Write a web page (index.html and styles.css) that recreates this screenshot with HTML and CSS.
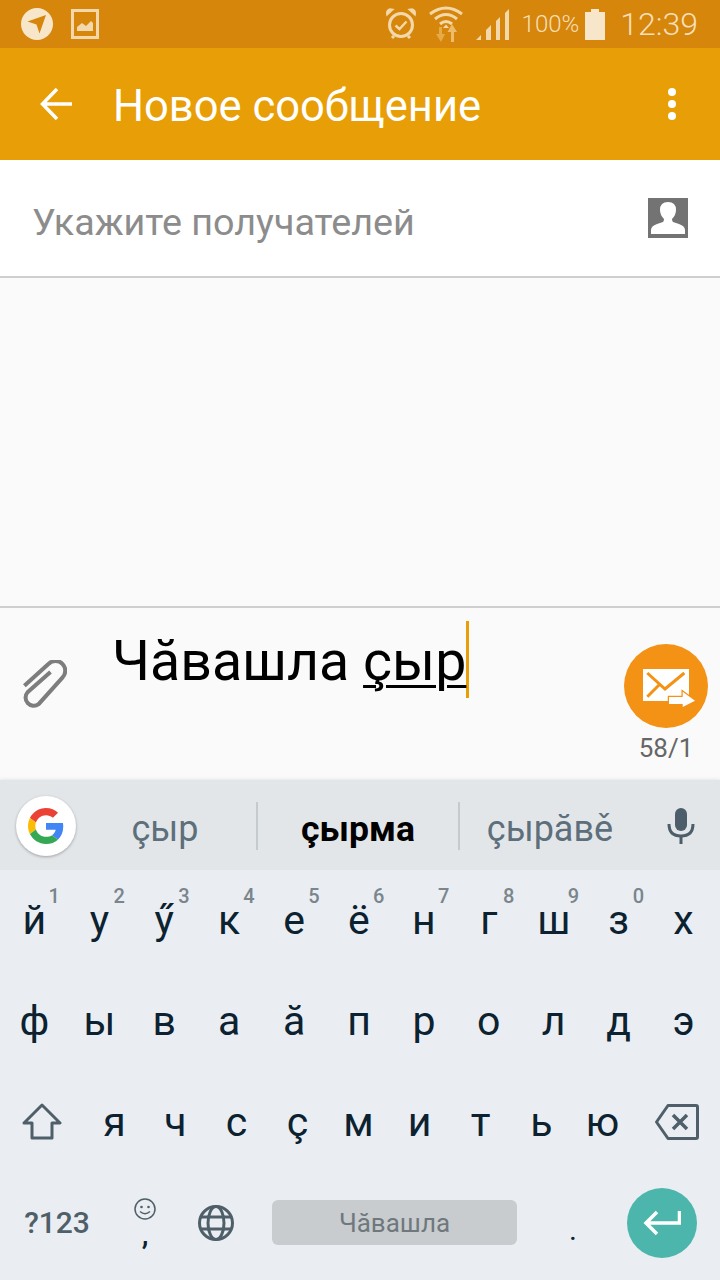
FILE: index.html
```html
<!DOCTYPE html>
<html lang="cv">

<head>
  <meta charset="UTF-8">
  <meta name="viewport" content="width=device-width, initial-scale=1.0">
  <title>Новое сообщение</title>
  <link rel="stylesheet" href="styles.css">
</head>

<body>
  <div class="screen">
    <header class="status_bar">
      <div class="status_left">
        <svg width="32" height="32" viewBox="0 0 32 32"><circle cx="16" cy="16" r="16" fill="#f8e6cb"/><path d="M6.500 13.500 L25 7 L18.500 25.500 L15.500 16.500 Z" fill="#d5860b"/></svg>
        <svg width="28" height="30" viewBox="0 0 28 30"><rect x="1.500" y="1.500" width="25" height="27" fill="none" stroke="#f3d8ab" stroke-width="3"/><path d="M6 22 V18 L11 14 L15 17 L20 12 L22 14 V22 Z" fill="#f3d8ab"/></svg>
      </div>
      <div class="status_right">
        <svg class="ic_alarm" width="30" height="32" viewBox="0 0 30 32"><circle cx="15" cy="17" r="11.500" fill="none" stroke="#f3d8ab" stroke-width="3"/><path d="M9.500 17.500 L13.500 21 L20.500 13.500" fill="none" stroke="#f3d8ab" stroke-width="2.500"/><path d="M1 7 L7 1.500 L4 1 Q0 2 1 7 Z M29 7 L23 1.500 L26 1 Q30 2 29 7 Z" fill="#f3d8ab" stroke="#f3d8ab" stroke-width="1.500"/><path d="M6 30 L8 28 M24 30 L22 28" stroke="#f3d8ab" stroke-width="3"/></svg>
        <svg class="ic_wifi" width="34" height="36" viewBox="0 0 34 36"><g fill="none" stroke="#f3d8ab" stroke-width="3"><path d="M1 8 Q17 -4 33 8"/><path d="M6 13 Q17 4 28 13"/><path d="M11 18 Q17 13 23 18"/></g><path d="M14 22 L17 18.500 L20 22 Z" fill="#f3d8ab"/><path d="M10 21 V28 H7 L12 36 L16 28 H13 V21 Z" fill="#e7aa48"/><path d="M22 36 V26 H18.500 L23 18 L28 26 H25 V36 Z" fill="#eebb6c"/></svg>
        <svg class="ic_signal" width="33" height="33" viewBox="0 0 33 33"><path d="M0 32 L5 27 V32 Z M10 32 V22 L15 17 V32 Z M20 32 V13 L24 9 V32 Z M29 32 V5 L33 1 V32 Z" fill="#f3d8ab"/></svg>
        <span class="battery_text">100%</span>
        <svg class="ic_battery" width="20" height="31" viewBox="0 0 20 31"><path d="M0 3 H6 V0 H14 V3 H20 V31 H0 Z" fill="#f8e6cb"/></svg>
        <time class="clock">12:39</time>
      </div>
    </header>

    <div class="toolbar">
      <svg class="ic_back" width="34" height="34" viewBox="0 0 34 34"><path d="M33 17 H4 M18 2 L3.500 17 L18 32" fill="none" stroke="#fff" stroke-width="3.500"/></svg>
      <h1 class="toolbar_title">Новое сообщение</h1>
      <div class="more_dots"><i></i><i></i><i></i></div>
    </div>

    <div class="recipient">
      <span class="recipient_hint">Укажите получателей</span>
      <svg width="40" height="40" viewBox="0 0 40 40"><rect width="40" height="40" fill="#737373"/><path d="M3 36 V32 Q3 28 9 26 L15 24 Q16 23 16 21 Q12 17 12 12 Q12 4 20 4 Q28 4 28 12 Q28 17 24 21 Q24 23 25 24 L31 26 Q37 28 37 32 V36 Z" fill="#fff"/></svg>
    </div>

    <main class="thread"></main>

    <section class="compose">
      <svg class="ic_clip" width="44" height="48" viewBox="0 0 48 52"><path d="M1.500 28 L28 4 A10.600 10.600 0 0 1 43 19 L17 48 A8.900 8.900 0 0 1 5 35 L30 13" fill="none" stroke="#7d7d7d" stroke-width="4.400"/></svg>
      <p class="message"><span>Чăвашла </span><span class="message_current">çыр</span></p>
      <div class="send">
        <div class="send_btn">
          <svg width="56" height="46" viewBox="0 0 56 46"><rect x="1" y="4" width="46" height="32" fill="#fff"/><path d="M5.300 8 L23 24 L42.300 8 M5.300 31.700 L18 19" fill="none" stroke="#f39214" stroke-width="3"/><path d="M27 32 H40.700 V26.700 L53 35.700 L40.700 42 V39 H27 Z" fill="#fff" stroke="#f39214" stroke-width="2.500" paint-order="stroke"/></svg>
        </div>
        <span class="send_count">58/1</span>
      </div>
    </section>

    <div class="suggestions">
      <div class="g_btn">
        <svg width="36" height="36" viewBox="0 0 48 48"><path fill="#EA4335" d="M24 9.500c3.540 0 6.710 1.220 9.210 3.600l6.850-6.850C35.900 2.380 30.470 0 24 0 14.620 0 6.510 5.380 2.560 13.220l7.980 6.190C12.430 13.720 17.740 9.500 24 9.500z"/><path fill="#4285F4" d="M46.980 24.550c0-1.570-.15-3.090-.38-4.550H24v9.020h12.940c-.58 2.960-2.260 5.480-4.780 7.180l7.730 6c4.510-4.180 7.090-10.360 7.090-17.650z"/><path fill="#FBBC05" d="M10.530 28.590c-.48-1.450-.76-2.990-.76-4.590s.27-3.140.76-4.590l-7.980-6.190C.92 16.460 0 20.120 0 24c0 3.880.92 7.540 2.560 10.780l7.970-6.190z"/><path fill="#34A853" d="M24 48c6.480 0 11.930-2.130 15.890-5.810l-7.730-6c-2.150 1.450-4.920 2.300-8.160 2.300-6.260 0-11.570-4.220-13.470-9.910l-7.980 6.190C6.510 42.620 14.620 48 24 48z"/></svg>
      </div>
      <span class="suggest suggest_first">çыр</span>
      <span class="suggest suggest_main">çырма</span>
      <span class="suggest">çырăвě</span>
      <svg class="ic_mic" width="28" height="36" viewBox="0 0 28 36"><rect x="8" y="0" width="12" height="23" rx="6" fill="#4c5e69"/><path d="M2 16 Q2 28 14 28 Q26 28 26 16" fill="none" stroke="#4c5e69" stroke-width="3"/><rect x="12.500" y="28" width="3" height="8" fill="#4c5e69"/></svg>
    </div>

    <div class="keyboard">
      <div class="key_row row_full">
        <div class="key">й<sup>1</sup></div>
        <div class="key">у<sup>2</sup></div>
        <div class="key">ӳ<sup>3</sup></div>
        <div class="key">к<sup>4</sup></div>
        <div class="key">е<sup>5</sup></div>
        <div class="key">ё<sup>6</sup></div>
        <div class="key">н<sup>7</sup></div>
        <div class="key">г<sup>8</sup></div>
        <div class="key">ш<sup>9</sup></div>
        <div class="key">з<sup>0</sup></div>
        <div class="key">х</div>
      </div>
      <div class="key_row row_full">
        <div class="key">ф</div>
        <div class="key">ы</div>
        <div class="key">в</div>
        <div class="key">а</div>
        <div class="key">ă</div>
        <div class="key">п</div>
        <div class="key">р</div>
        <div class="key">о</div>
        <div class="key">л</div>
        <div class="key">д</div>
        <div class="key">э</div>
      </div>
      <div class="key_row row_shift">
        <div class="key">
          <svg width="40" height="38" viewBox="0 0 40 38"><path d="M20 2 L38 20 H30 V35 H10 V20 H2 Z" fill="none" stroke="#4f5f69" stroke-width="3" stroke-linejoin="round"/></svg>
        </div>
        <div class="key">я</div>
        <div class="key">ч</div>
        <div class="key">с</div>
        <div class="key">ç</div>
        <div class="key">м</div>
        <div class="key">и</div>
        <div class="key">т</div>
        <div class="key">ь</div>
        <div class="key">ю</div>
        <div class="key">
          <svg width="44" height="36" viewBox="0 0 44 36"><path d="M1.500 18 L13 1.500 H41 Q42.500 1.500 42.500 3 V33 Q42.500 34.500 41 34.500 H13 Z" fill="none" stroke="#4f5f69" stroke-width="3" stroke-linejoin="round"/><path d="M18 11 L32 25 M32 11 L18 25" stroke="#4f5f69" stroke-width="3.500"/></svg>
        </div>
      </div>
      <div class="key_row row_bottom">
        <div class="key key_sym">?123</div>
        <div class="key key_emoji">
          <svg width="22" height="22" viewBox="0 0 22 22"><circle cx="11" cy="11" r="10" fill="none" stroke="#4f5f69" stroke-width="1.500"/><circle cx="7.500" cy="9" r="1.300" fill="#4f5f69"/><circle cx="14.500" cy="9" r="1.300" fill="#4f5f69"/><path d="M6 13.500 Q11 18 16 13.500" fill="none" stroke="#4f5f69" stroke-width="1.500"/></svg>
          <span>,</span>
        </div>
        <div class="key">
          <svg width="38" height="38" viewBox="0 0 38 38"><g fill="none" stroke="#4f5f69" stroke-width="3"><circle cx="19" cy="19" r="16.500"/><ellipse cx="19" cy="19" rx="8" ry="16.500"/><path d="M4 13 H34 M4 25 H34"/></g></svg>
        </div>
        <div class="key"><div class="space_bar">Чăвашла</div></div>
        <div class="key key_dot">.</div>
        <div class="key">
          <div class="enter_btn">
            <svg width="38" height="26" viewBox="0 0 38 26"><path d="M36.500 1 V13 H4 M14 2 L3 13 L14 24" fill="none" stroke="#fff" stroke-width="3.500"/></svg>
          </div>
        </div>
      </div>
    </div>
  </div>
</body>

</html>
```

FILE: styles.css
```css
* {
  box-sizing: border-box;
  margin: 0;
}

body {
  margin: 0;
  font-family: Roboto, "Noto Sans", sans-serif;
}

.screen {
  display: flex;
  flex-direction: column;
  width: 720px;
  height: 1280px;
  overflow: hidden;
  background: #fafafa;
}

/* status bar */
.status_bar {
  display: flex;
  justify-content: space-between;
  align-items: center;
  height: 48px;
  padding: 0 22px 0 21px;
  background: #d5860b;
  color: #f6dfb9;
}

.status_left,
.status_right {
  display: flex;
  align-items: center;
}

.status_left {
  gap: 18px;
}

.status_left svg,
.status_right svg {
  display: block;
}

.ic_alarm {
  margin-right: 13px;
}

.ic_wifi {
  margin-right: 13px;
}

.ic_signal {
  margin-right: 13px;
}

.battery_text {
  font-size: 24px;
  font-weight: 300;
  margin-right: 6px;
}

.ic_battery {
  margin-right: 15px;
}

.clock {
  font-size: 32px;
  font-weight: 300;
}

/* toolbar */
.toolbar {
  display: flex;
  align-items: center;
  height: 112px;
  padding: 0 44px 0 39px;
  background: #e89e06;
  color: #fff;
}

.ic_back {
  margin-right: 40px;
}

.toolbar_title {
  flex: 1;
  padding-top: 5px;
  font-size: 43.5px;
  font-weight: 400;
}

.more_dots {
  display: flex;
  flex-direction: column;
  gap: 4px;
}

.more_dots i {
  display: block;
  width: 8px;
  height: 8px;
  border-radius: 50%;
  background: #fff;
}

/* recipient */
.recipient {
  display: flex;
  justify-content: space-between;
  align-items: center;
  height: 118px;
  padding: 0 32px;
  background: #fff;
  border-bottom: 2px solid #cfcfcf;
}

.recipient_hint {
  padding-top: 8px;
  font-size: 37.7px;
  color: #8c8c8c;
}

.thread {
  flex: 1;
  background: #fafafa;
}

/* compose */
.compose {
  display: flex;
  flex: none;
  height: 174px;
  padding: 0 12px 0 23px;
  border-top: 2px solid #cfcfcf;
  background: #fafafa;
}

.ic_clip {
  margin-top: 52px;
  margin-right: 45px;
  flex-shrink: 0;
}

.message {
  flex: 1;
  padding-top: 19px;
  font-size: 55.5px;
  line-height: 70px;
  color: #000;
  white-space: pre;
}

.message_current {
  padding: 8px 0 4px;
  border-right: 3px solid #e89e06;
  text-decoration: underline;
  text-decoration-thickness: 3px;
  text-underline-offset: 5px;
}

.send {
  display: flex;
  flex-direction: column;
  align-items: center;
  width: 84px;
  padding-top: 36px;
}

.send_btn {
  display: flex;
  justify-content: center;
  align-items: center;
  width: 84px;
  height: 84px;
  border-radius: 50%;
  background: #f39214;
}

.send_btn svg {
  margin: 4px 0 0 8px;
}

.send_count {
  margin-top: 5px;
  font-size: 26px;
  color: #666;
}

/* suggestion strip */
.suggestions {
  display: grid;
  flex: none;
  grid-template-columns: 92px 164px 204px 180px 80px;
  align-items: center;
  height: 90px;
  padding-top: 2px;
  background: #e3e6e9;
  box-shadow: 0 -1px 3px rgba(0, 0, 0, 0.08);
}

.g_btn {
  display: flex;
  justify-content: center;
  align-items: center;
  width: 60px;
  height: 60px;
  margin-left: 16px;
  border-radius: 50%;
  background: #fff;
  box-shadow: 0 1px 3px rgba(0, 0, 0, 0.3);
}

.suggest {
  display: flex;
  justify-content: center;
  align-items: center;
  height: 48px;
  padding-top: 6px;
  font-size: 36px;
  color: #5d6f7b;
}

.suggest_first {
  padding-right: 18px;
}

.suggest_main {
  border-left: 2px solid #c5cacd;
  border-right: 2px solid #c5cacd;
  font-size: 35.5px;
  font-weight: 700;
  color: #000;
}

.ic_mic {
  justify-self: center;
  margin-left: 2px;
}

/* keyboard */
.keyboard {
  flex: none;
  display: flex;
  flex-direction: column;
  height: 410px;
  padding-bottom: 3px;
  background: #eaeef2;
}

.key_row {
  flex: 1;
  display: grid;
  align-items: center;
}

.row_full {
  grid-template-columns: repeat(11, 1fr);
  padding-right: 4px;
  padding-left: 2px;
}

.row_shift {
  grid-template-columns: 84px repeat(9, 61px) 87px;
}

.row_bottom {
  grid-template-columns: 114px 62px 80px 277px 80px 98px;
  padding-bottom: 4px;
}

.key {
  position: relative;
  display: flex;
  justify-content: center;
  align-items: center;
  font-size: 41px;
  color: #0d2230;
}

.key sup {
  position: absolute;
  top: -12px;
  right: 7px;
  font-size: 20px;
  font-weight: 500;
  line-height: 24px;
  color: #7a858c;
}

.key_sym {
  font-size: 30px;
  font-weight: 500;
  color: #4f5f69;
}

.key_emoji {
  flex-direction: column;
  font-size: 30px;
  font-weight: 500;
  line-height: 28px;
}

.key_dot {
  padding-top: 14px;
  font-size: 30px;
}

.space_bar {
  display: flex;
  justify-content: center;
  align-items: center;
  width: 245px;
  height: 45px;
  border-radius: 6px;
  background: #c8cccf;
  font-size: 26px;
  color: #6f787d;
}

.enter_btn {
  display: flex;
  justify-content: center;
  align-items: center;
  width: 70px;
  height: 70px;
  border-radius: 50%;
  background: #4db6ac;
}
```
